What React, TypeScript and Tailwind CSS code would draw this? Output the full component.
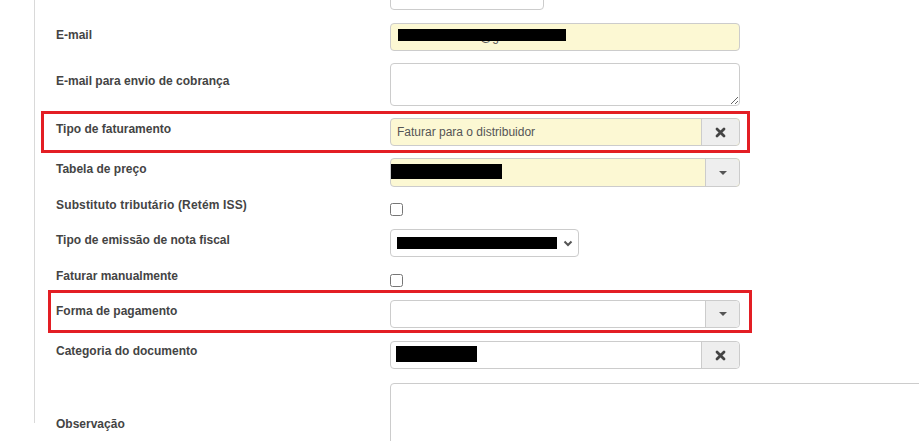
import React from 'react';

const label = 'w-[334px] shrink-0 text-[12px] leading-4 font-bold text-[#444]';
const box = 'relative rounded-[4px] border border-[#ccc]';

function ClearButton() {
  return (
    <div className="flex w-[38px] shrink-0 items-center justify-center rounded-r-[4px] border-l border-[#ccc] bg-[#eee]">
      <svg width="11" height="11" viewBox="0 0 11 11">
        <path d="M2 2 L9 9 M9 2 L2 9" stroke="#444" strokeWidth="2.8" strokeLinecap="round" />
      </svg>
    </div>
  );
}

function CaretButton() {
  return (
    <div className="flex w-[34px] shrink-0 items-center justify-center rounded-r-[4px] border-l border-[#ccc] bg-[#eee]">
      <div className="h-0 w-0 border-x-4 border-t-4 border-x-transparent border-t-[#555]" />
    </div>
  );
}

function Redacted({ w, h, left, top }: { w: number; h: number; left: number; top: number }) {
  // tarja preta por cima do dado
  return <div className="absolute bg-black" style={{ width: w, height: h, left, top }} />;
}

export default function App() {
  return (
    <div className="relative h-[441px] w-[919px] overflow-hidden bg-white font-['Liberation_Sans',Arial,sans-serif]">
      <div className="ml-[34px] h-full border-l border-[#d9d9d9] pl-[21px]">
        {/* campo anterior, cortado no topo */}
        <div className="-mt-[18px] flex h-[41px]">
          <div className="w-[334px] shrink-0" />
          <div className={`${box} h-[28px] w-[154px]`} />
        </div>

        {/* E-mail */}
        <div className="flex h-[40px]">
          <div className={`${label} mt-[4px]`}>E-mail</div>
          <div className={`${box} h-[28px] w-[350px] overflow-hidden bg-[#fcf8d3] text-[12px] text-[#555]`}>
            <span className="absolute left-[89px] top-[7px] leading-[12px]">@g</span>
            <Redacted w={168} h={12} left={7} top={5} />
          </div>
        </div>

        {/* E-mail cobrança */}
        <div className="flex h-[55px]">
          <div className={`${label} mt-[10px]`}>E-mail para envio de cobrança</div>
          <textarea className="h-[43px] w-[350px] rounded-[4px] border border-[#ccc] bg-white" />
        </div>

        {/* Tipo de faturamento */}
        <div className="flex h-[40px]">
          <div className={`${label} mt-[3px]`}>Tipo de faturamento</div>
          <div className={`${box} flex h-[28px] w-[350px] overflow-hidden bg-[#fcf8d3]`}>
            <div className="flex flex-1 items-center pl-[6px] text-[12px] text-[#555]">Faturar para o distribuidor</div>
            <ClearButton />
          </div>
        </div>

        {/* Tabela de preço */}
        <div className="flex h-[39px]">
          <div className={`${label} mt-[3px]`}>Tabela de preço</div>
          <div className={`${box} flex h-[29px] w-[350px] overflow-hidden bg-[#fcf8d3]`}>
            <div className="flex-1" />
            <CaretButton />
            <Redacted w={111} h={15} left={0} top={5} />
          </div>
        </div>

        {/* Substituto tributário */}
        <div className="flex h-[32px]">
          <div className={`${label} mt-[0px] tracking-[0.15px]`}>Substituto tributário (Retém ISS)</div>
          <input type="checkbox" className="mt-[6px] h-[13px] w-[13px]" />
        </div>

        {/* Tipo de emissão */}
        <div className="flex h-[39px]">
          <div className={`${label} mt-[3px]`}>Tipo de emissão de nota fiscal</div>
          <div className={`${box} flex h-[28px] w-[189px] items-center justify-end bg-white pr-[5px]`}>
            <svg width="10" height="7" viewBox="0 0 10 7">
              <path d="M1.5 1.5 L5 5 L8.5 1.5" stroke="#555" strokeWidth="2" fill="none" />
            </svg>
            <Redacted w={160} h={12} left={6} top={7} />
          </div>
        </div>

        {/* Faturar manualmente */}
        <div className="flex h-[32px]">
          <div className={`${label} mt-[0px]`}>Faturar manualmente</div>
          <input type="checkbox" className="mt-[6px] h-[13px] w-[13px]" />
        </div>

        {/* Forma de pagamento */}
        <div className="flex h-[41px]">
          <div className={`${label} mt-[3px]`}>Forma de pagamento</div>
          <div className={`${box} flex h-[28px] w-[350px] overflow-hidden bg-white`}>
            <div className="flex-1" />
            <CaretButton />
          </div>
        </div>

        {/* Categoria do documento */}
        <div className="flex h-[42px]">
          <div className={`${label} mt-[2px]`}>Categoria do documento</div>
          <div className={`${box} flex h-[28px] w-[350px] overflow-hidden bg-white`}>
            <div className="flex-1" />
            <ClearButton />
            <Redacted w={81} h={16} left={5} top={4} />
          </div>
        </div>

        {/* Observação */}
        <div className="flex h-[100px]">
          <div className={`${label} mt-[33px]`}>Observação</div>
          <div className={`${box} h-[100px] w-[560px] shrink-0 bg-white`} />
        </div>
      </div>

      {/* marcações em vermelho */}
      <div className="pointer-events-none absolute left-[41px] top-[111px] h-[42px] w-[709px] border-[3px] border-[#e31e24]" />
      <div className="pointer-events-none absolute left-[48px] top-[290px] h-[43px] w-[704px] border-[3px] border-[#e31e24]" />
    </div>
  );
}
